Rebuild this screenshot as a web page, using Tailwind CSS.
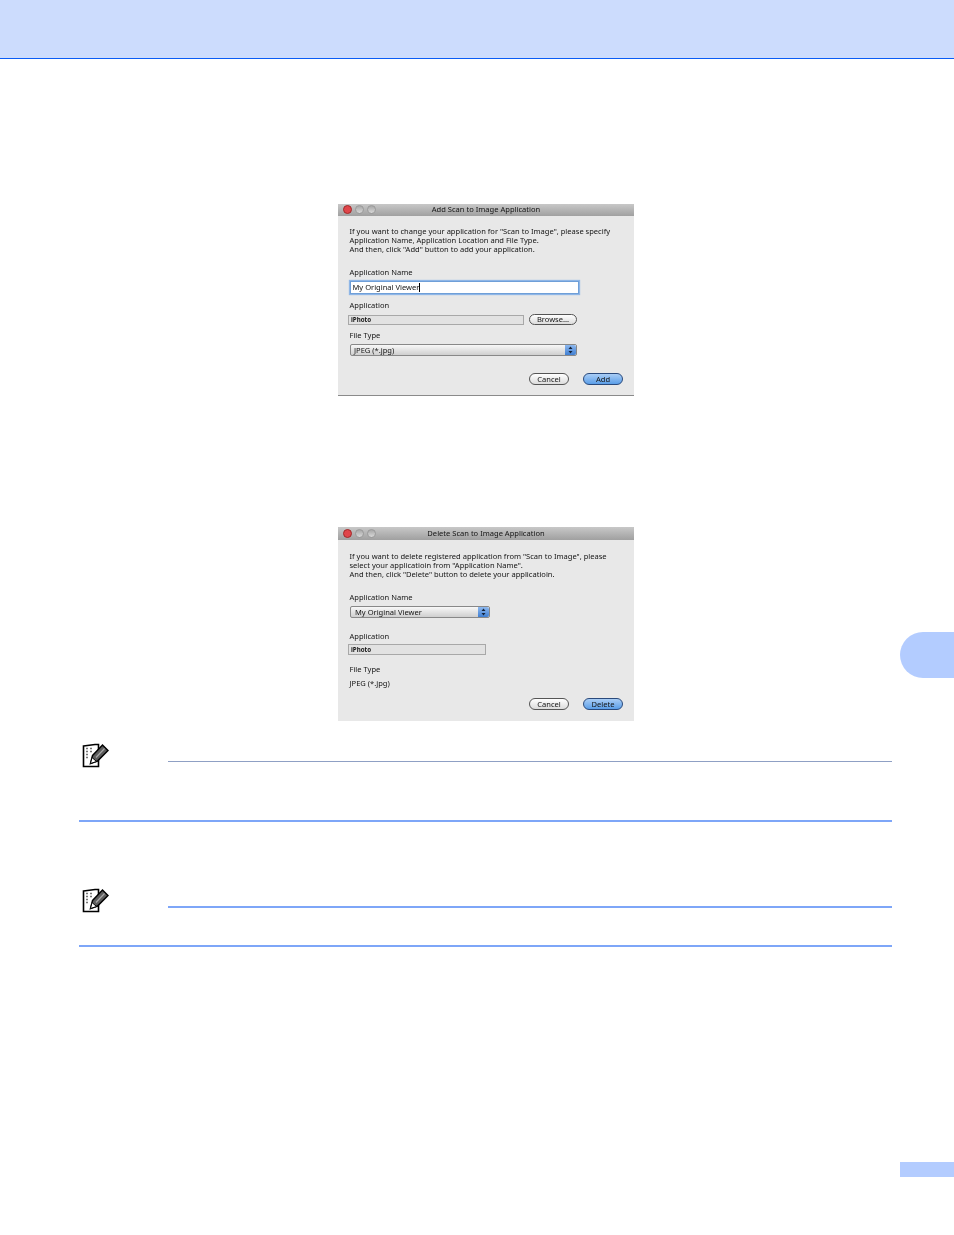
<!DOCTYPE html>
<html>
<head>
    <title>Scan to Image</title>
    <meta charset="utf-8" />
    <script src="https://cdn.jsdelivr.net/npm/@tailwindcss/browser@4"></script>
</head>
<body class="bg-white">
<div class="relative h-[1235px] w-[954px] overflow-hidden font-['Noto_Sans',sans-serif] text-[7.55px] text-[#141414]">
    <!-- header band -->
    <div class="h-[59px] border-b border-[#0a5cf5] bg-[#ccdcfd]"></div>

    <!-- first dialog -->
    <div class="ml-[338px] mt-[145px] h-[192px] w-[296px] border-b border-[#8a8a8a] bg-[#e8e8e8] blur-[0.3px]">
        <div class="relative flex h-[12px] items-center justify-center bg-gradient-to-b from-[#c8c8c8] to-[#a0a0a0] leading-none">
            <div class="absolute left-[5px] top-[1px] flex gap-[3px]">
                <span class="size-[9px] rounded-full border border-[#a02a2a] bg-[#e0454a]"></span>
                <span class="size-[9px] rounded-full border border-[#9a9a9a] bg-gradient-to-b from-[#a8a8a8] to-[#d8d8d8]"></span>
                <span class="size-[9px] rounded-full border border-[#9a9a9a] bg-gradient-to-b from-[#a8a8a8] to-[#d8d8d8]"></span>
            </div>
            Add Scan to Image Application
        </div>
        <div class="pl-[11.5px] pt-[11px] leading-[9px]">
            <p>If you want to change your application for "Scan to Image", please specify</p>
            <p>Application Name, Application Location and File Type.</p>
            <p>And then, click "Add" button to add your application.</p>
            <p class="mt-[14px]">Application Name</p>
            <div class="mt-[4px] flex h-[13px] w-[229px] items-center border border-[#6f9fd8] bg-white pl-[2px] shadow-[0_0_1px_1px_#8fb6e6]">My Original Viewer<span class="h-[9px] w-px bg-black"></span></div>
            <p class="mt-[7px]">Application</p>
            <div class="-ml-[1.5px] mt-[4px] flex items-center gap-[5px]">
                <div class="flex h-[10px] w-[176px] items-center border border-[#a8a8a8] bg-[#e2e2e2] pl-[2px] text-[6.2px] font-bold">iPhoto</div>
                <div class="flex h-[11px] w-[48px] items-center justify-center rounded-full border border-[#555] bg-gradient-to-b from-white to-[#dcdcdc]">Browse...</div>
            </div>
            <p class="mt-[6px]">File Type</p>
            <div class="mt-[4px] ml-[0.5px] flex h-[12px] w-[227px] items-center justify-between rounded-[2px] border border-[#888] bg-gradient-to-b from-[#f8f8f8] to-[#cfcfcf] pl-[3px]">
                JPEG (*.jpg)
                <span class="flex h-full w-[11px] items-center justify-center rounded-r-[2px] bg-gradient-to-b from-[#8db8ee] to-[#3f7fd2]">
                    <svg width="5" height="8" viewBox="0 0 5 8"><path d="M2.5 0.5 4.5 3H.5zM2.5 7.5 .5 5h4z" fill="#15233a"/></svg>
                </span>
            </div>
            <div class="ml-[179.5px] mt-[17px] flex gap-[14px]">
                <div class="flex h-[12px] w-[40px] items-center justify-center rounded-full border border-[#555] bg-gradient-to-b from-white to-[#dcdcdc]">Cancel</div>
                <div class="flex h-[12px] w-[40px] items-center justify-center rounded-full border border-[#2a4a7c] bg-gradient-to-b from-[#a9cdf5] to-[#5a9ee8]">Add</div>
            </div>
        </div>
    </div>

    <!-- second dialog -->
    <div class="ml-[338px] mt-[131px] h-[194px] w-[296px] bg-[#e8e8e8] blur-[0.3px]">
        <div class="relative flex h-[13px] items-center justify-center bg-gradient-to-b from-[#c8c8c8] to-[#a0a0a0] leading-none">
            <div class="absolute left-[5px] top-[2px] flex gap-[3px]">
                <span class="size-[9px] rounded-full border border-[#a02a2a] bg-[#e0454a]"></span>
                <span class="size-[9px] rounded-full border border-[#9a9a9a] bg-gradient-to-b from-[#a8a8a8] to-[#d8d8d8]"></span>
                <span class="size-[9px] rounded-full border border-[#9a9a9a] bg-gradient-to-b from-[#a8a8a8] to-[#d8d8d8]"></span>
            </div>
            Delete Scan to Image Application
        </div>
        <div class="pl-[11.5px] pt-[12px] leading-[9px]">
            <p>If you want to delete registered application from "Scan to Image", please</p>
            <p>select your applicatioin from "Application Name".</p>
            <p>And then, click "Delete" button to delete your applicatioin.</p>
            <p class="mt-[14px]">Application Name</p>
            <div class="ml-[0.5px] mt-[4px] flex h-[12px] w-[140px] items-center justify-between rounded-[2px] border border-[#888] bg-gradient-to-b from-[#f8f8f8] to-[#cfcfcf] pl-[4px]">
                My Original Viewer
                <span class="flex h-full w-[11px] items-center justify-center rounded-r-[2px] bg-gradient-to-b from-[#8db8ee] to-[#3f7fd2]">
                    <svg width="5" height="8" viewBox="0 0 5 8"><path d="M2.5 0.5 4.5 3H.5zM2.5 7.5 .5 5h4z" fill="#15233a"/></svg>
                </span>
            </div>
            <p class="mt-[14px]">Application</p>
            <div class="-ml-[1.5px] mt-[3px] flex h-[11px] w-[138px] items-center border border-[#a8a8a8] bg-[#e2e2e2] pl-[2px] text-[6.2px] font-bold">iPhoto</div>
            <p class="mt-[10px]">File Type</p>
            <p class="mt-[5px]">JPEG (*.jpg)</p>
            <div class="ml-[179.5px] mt-[10px] flex gap-[14px]">
                <div class="flex h-[12px] w-[40px] items-center justify-center rounded-full border border-[#555] bg-gradient-to-b from-white to-[#dcdcdc]">Cancel</div>
                <div class="flex h-[12px] w-[40px] items-center justify-center rounded-full border border-[#2a4a7c] bg-gradient-to-b from-[#a9cdf5] to-[#5a9ee8]">Delete</div>
            </div>
        </div>
    </div>

    <!-- first note -->
    <div class="ml-[79px] mt-[22px] h-[79px] w-[813px] border-b-2 border-[#7ea6f8]">
        <div class="flex">
            <svg class="ml-[3px] shrink-0" width="27" height="25" viewBox="0 0 27 25">
                <path d="M1.5 3 13 1.5 H16.5 V23.5 H1.5 Z" fill="#fff" stroke="#000" stroke-width="1.6"/>
                <path d="M4 5.5h2M8 5.5h2M4 8.5h2M8 8.5h2M4 11.5h2M4 14.5h2" stroke="#777" stroke-width="1.3"/>
                <path d="M10.5 12.5 20.5 2 26 7.5 15.5 18 8.5 20.5Z" fill="#5c5c5c" stroke="#000" stroke-width="1.5"/>
                <path d="M14 14.5 22.5 5.5" stroke="#a8a8a8" stroke-width="1.2"/>
                <path d="M8.5 20.5 10 14.5 14.5 18.5Z" fill="#fff" stroke="#000" stroke-width="1"/>
            </svg>
            <div class="ml-[59px] mt-[18px] h-px flex-1 bg-[#8fa0c4]"></div>
        </div>
    </div>

    <!-- second note -->
    <div class="ml-[79px] mt-[66px] h-[59px] w-[813px] border-b-2 border-[#7ea6f8]">
        <div class="flex">
            <svg class="ml-[3px] shrink-0" width="27" height="25" viewBox="0 0 27 25">
                <path d="M1.5 3 13 1.5 H16.5 V23.5 H1.5 Z" fill="#fff" stroke="#000" stroke-width="1.6"/>
                <path d="M4 5.5h2M8 5.5h2M4 8.5h2M8 8.5h2M4 11.5h2M4 14.5h2" stroke="#777" stroke-width="1.3"/>
                <path d="M10.5 12.5 20.5 2 26 7.5 15.5 18 8.5 20.5Z" fill="#5c5c5c" stroke="#000" stroke-width="1.5"/>
                <path d="M14 14.5 22.5 5.5" stroke="#a8a8a8" stroke-width="1.2"/>
                <path d="M8.5 20.5 10 14.5 14.5 18.5Z" fill="#fff" stroke="#000" stroke-width="1"/>
            </svg>
            <div class="ml-[59px] mt-[18px] h-[2px] flex-1 bg-[#7ea6f8]"></div>
        </div>
    </div>

    <!-- chapter tab and page number box -->
    <div class="absolute left-[900px] top-[632px] h-[46px] w-[54px] rounded-l-[23px] bg-[#b3ccff]"></div>
    <div class="absolute left-[900px] top-[1162px] h-[15px] w-[54px] bg-[#b3ccff]"></div>
</div>
</body>
</html>
